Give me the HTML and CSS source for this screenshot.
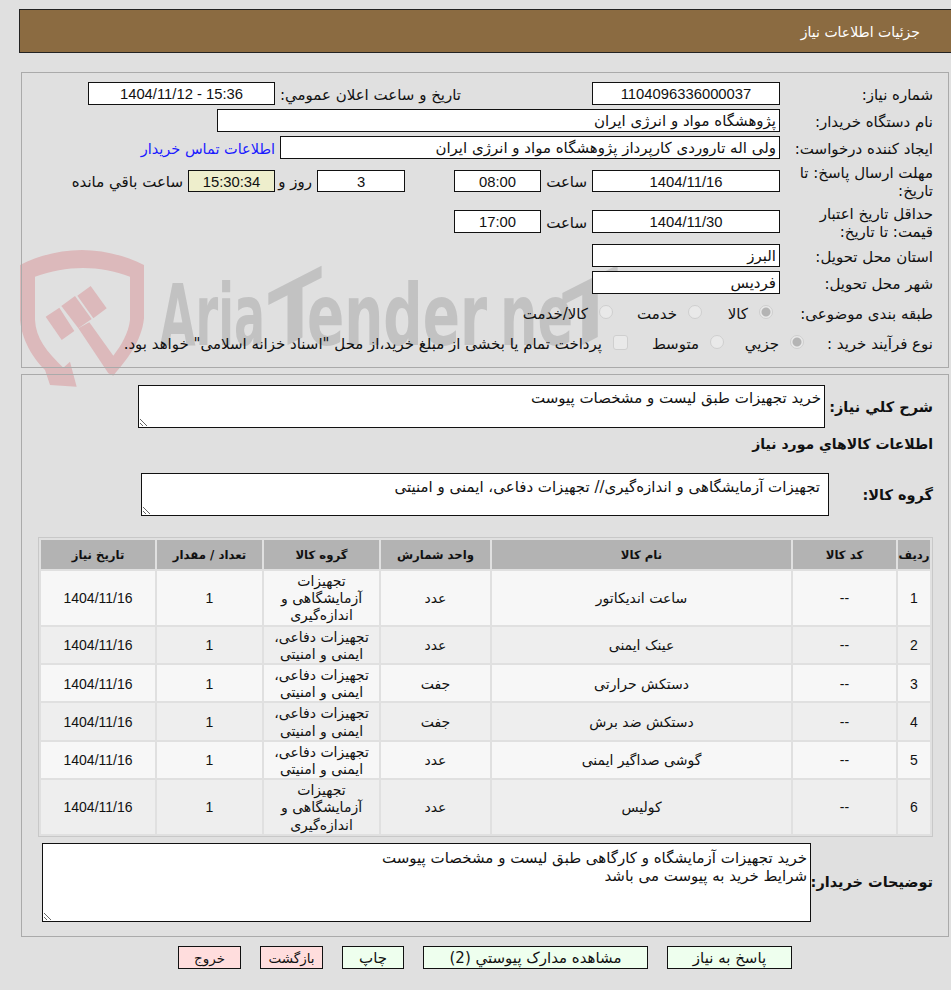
FILE: index.html
```html
<!DOCTYPE html>
<html lang="fa" dir="rtl">
<head>
<meta charset="utf-8">
<title>جزئیات اطلاعات نیاز</title>
<link rel="stylesheet" href="styles.css">
</head>
<body>
<svg class="mark-shield" viewBox="0 0 420 435" aria-hidden="true">
  <path class="shield" d="M170 425L150 350L130 368C80 320 48 280 45 225L45 95C140 60 240 60 330 95L330 225C325 265 305 300 280 332L208 232L175 250L265 385L280 392C320 345 365 290 372 220L372 60C250 0 120 0 0 60L0 225C8 300 50 350 75 375L90 420Z"/>
  <path class="shield" d="M77 215L118 188L163 258L125 285Z"/>
  <path class="shield" d="M124 183L165 153L215 222L175 250Z"/>
  <path class="shield" d="M172 152L212 123L260 190L220 220Z"/>
</svg>
<svg class="mark-text" viewBox="0 0 480 110" aria-hidden="true">
  <text class="mark-word" x="0" y="85" textLength="105" lengthAdjust="spacingAndGlyphs">Aria</text>
  <text class="mark-word" x="108" y="85" textLength="54" lengthAdjust="spacingAndGlyphs" transform="translate(0 65) skewY(-27)">T</text>
  <text class="mark-word" x="147" y="85" textLength="180" lengthAdjust="spacingAndGlyphs">ender</text>
  <text class="mark-word" x="340" y="85" textLength="73" lengthAdjust="spacingAndGlyphs">ne</text>
  <text class="mark-word" x="402" y="85" textLength="56" lengthAdjust="spacingAndGlyphs" transform="translate(0 215) skewY(-27)">T</text>
</svg>

<header class="title-bar">جزئیات اطلاعات نیاز</header>

<section class="panel panel-info">
  <div class="row">
    <div class="label">شماره نیاز:</div>
    <div class="field center num w188">1104096336000037</div>
    <div class="label second-label">تاریخ و ساعت اعلان عمومي:</div>
    <div class="field center num w187">1404/11/12 - 15:36</div>
  </div>
  <div class="row">
    <div class="label">نام دستگاه خریدار:</div>
    <div class="field w563">پژوهشگاه مواد و انرژی ایران</div>
  </div>
  <div class="row">
    <div class="label">ایجاد کننده درخواست:</div>
    <div class="field w500">ولی اله تاروردی کارپرداز پژوهشگاه مواد و انرژی ایران</div>
    <a class="contact" href="#">اطلاعات تماس خریدار</a>
  </div>
  <div class="row tall-a">
    <div class="label">مهلت ارسال پاسخ: تا<br>تاریخ:</div>
    <div class="field center num w188 short">1404/11/16</div>
    <div class="word w41">ساعت</div>
    <div class="field center num w87 short">08:00</div>
    <div class="field center num w88 short days">3</div>
    <div class="word w29">روز و</div>
    <div class="field center num w87 short timer">15:30:34</div>
    <div class="word">ساعت باقي مانده</div>
  </div>
  <div class="row tall-b">
    <div class="label">حداقل تاریخ اعتبار<br>قیمت: تا تاریخ:</div>
    <div class="field center num w188">1404/11/30</div>
    <div class="word w41">ساعت</div>
    <div class="field center num w87">17:00</div>
  </div>
  <div class="row">
    <div class="label">استان محل تحویل:</div>
    <div class="field w188">البرز</div>
  </div>
  <div class="row">
    <div class="label">شهر محل تحویل:</div>
    <div class="field w188">فردیس</div>
  </div>
  <div class="row choice">
    <div class="label wide">طبقه بندی موضوعی:</div>
    <label class="option o66"><input class="radio" type="radio" name="cat" checked disabled>کالا</label>
    <label class="option o84"><input class="radio" type="radio" name="cat" disabled>خدمت</label>
    <label class="option"><input class="radio" type="radio" name="cat" disabled>کالا/خدمت</label>
  </div>
  <div class="row choice">
    <div class="label narrow">نوع فرآیند خرید :</div>
    <label class="option o75"><input class="radio" type="radio" name="proc" checked disabled>جزيي</label>
    <label class="option o91"><input class="radio" type="radio" name="proc" disabled>متوسط</label>
    <label class="option"><input class="check" type="checkbox" disabled>پرداخت تمام یا بخشی از مبلغ خرید،از محل "اسناد خزانه اسلامی" خواهد بود.</label>
  </div>
</section>

<section class="panel panel-items">
  <div class="block first">
    <div class="strong l108">شرح کلي نياز:</div>
    <textarea class="box b687" readonly>خرید تجهیزات طبق لیست و مشخصات پیوست</textarea>
  </div>
  <h2 class="strong heading">اطلاعات کالاهاي مورد نياز</h2>
  <div class="block">
    <div class="strong l104">گروه کالا:</div>
    <textarea class="box b688" readonly>تجهیزات آزمایشگاهی و اندازه‌گیری// تجهیزات دفاعی، ایمنی و امنیتی</textarea>
  </div>
  <table class="items">
    <colgroup>
      <col class="c32"><col class="c103"><col class="c299"><col class="c109"><col class="c115"><col class="c105"><col class="c114">
    </colgroup>
    <thead>
      <tr><th>ردیف</th><th>کد کالا</th><th>نام کالا</th><th>واحد شمارش</th><th>گروه کالا</th><th>تعداد / مقدار</th><th>تاریخ نیاز</th></tr>
    </thead>
    <tbody>
      <tr><td class="cn">1</td><td class="cn">--</td><td>ساعت اندیکاتور</td><td>عدد</td><td>تجهیزات<br>آزمایشگاهی و<br>اندازه‌گیری</td><td class="cn">1</td><td class="cn">1404/11/16</td></tr>
      <tr><td class="cn">2</td><td class="cn">--</td><td>عینک ایمنی</td><td>عدد</td><td>تجهیزات دفاعی،<br>ایمنی و امنیتی</td><td class="cn">1</td><td class="cn">1404/11/16</td></tr>
      <tr><td class="cn">3</td><td class="cn">--</td><td>دستکش حرارتی</td><td>جفت</td><td>تجهیزات دفاعی،<br>ایمنی و امنیتی</td><td class="cn">1</td><td class="cn">1404/11/16</td></tr>
      <tr><td class="cn">4</td><td class="cn">--</td><td>دستکش ضد برش</td><td>جفت</td><td>تجهیزات دفاعی،<br>ایمنی و امنیتی</td><td class="cn">1</td><td class="cn">1404/11/16</td></tr>
      <tr><td class="cn">5</td><td class="cn">--</td><td>گوشی صداگیر ایمنی</td><td>عدد</td><td>تجهیزات دفاعی،<br>ایمنی و امنیتی</td><td class="cn">1</td><td class="cn">1404/11/16</td></tr>
      <tr><td class="cn">6</td><td class="cn">--</td><td>کولیس</td><td>عدد</td><td>تجهیزات<br>آزمایشگاهی و<br>اندازه‌گیری</td><td class="cn">1</td><td class="cn">1404/11/16</td></tr>
    </tbody>
  </table>
  <div class="block last">
    <div class="strong l122">توضیحات خریدار:</div>
    <textarea class="box b769" readonly>خرید تجهیزات آزمایشگاه و کارگاهی طبق لیست و مشخصات پیوست
شرایط خرید به پیوست می باشد</textarea>
  </div>
</section>

<nav class="actions">
  <button class="btn go w125" type="button">پاسخ به نیاز</button>
  <button class="btn go w225" type="button">مشاهده مدارک پیوستي (2)</button>
  <button class="btn go w62" type="button">چاپ</button>
  <button class="btn stop w63" type="button">بازگشت</button>
  <button class="btn stop w63" type="button">خروج</button>
</nav>
</body>
</html>
```
FILE: styles.css
```css
html { background: #e0e0e0; }
body {
  margin: 0;
  width: 951px;
  height: 990px;
  position: relative;
  overflow: hidden;
  font-family: "DejaVu Sans", sans-serif;
  font-size: 15px;
  line-height: 18px;
  color: #111;
}
.mark-shield {
  position: absolute;
  left: 20px;
  top: 245px;
  width: 140px;
  height: 145px;
  z-index: -1;
}
.shield { fill: #dcb9bb; }
.mark-text {
  position: absolute;
  left: 160px;
  top: 260px;
  width: 480px;
  height: 110px;
  z-index: -1;
  direction: ltr;
}
.mark-word {
  fill: #c2c2c2;
  font-family: "DejaVu Sans", sans-serif;
  font-weight: 700;
  font-size: 85px;
}
.title-bar {
  box-sizing: border-box;
  height: 44px;
  margin: 9px 0 0 19px;
  padding: 0 31px 0 0;
  background: #8b6b41;
  border: solid #222;
  border-width: 1px 0 1px 1px;
  color: #fff;
  font-size: 14px;
  line-height: 44px;
}
.panel {
  box-sizing: border-box;
  width: 928px;
  margin-right: 2px;
  margin-left: 21px;
  border: 1px solid #aaa;
}
.panel-info {
  height: 296px;
  margin-top: 19px;
  padding: 9px 15px 0 0;
}
.panel-items {
  height: 563px;
  margin-top: 6px;
  padding: 0 15px 0 0;
}
.row {
  display: flex;
  align-items: center;
  gap: 5px;
  min-height: 23px;
  margin-bottom: 4px;
}
.row.tall-a { height: 36px; margin-bottom: 5px; }
.row.tall-b { height: 35px; margin-bottom: 5px; }
.row.choice { height: 30px; margin-bottom: 0; }
.label, .word, .contact { margin-top: 2px; }
.label {
  box-sizing: border-box;
  width: 148px;
  flex: none;
  white-space: nowrap;
}
.label.wide { width: 160px; margin-left: -5px; }
.label.narrow { width: 129px; margin-left: -5px; }
.label.second-label { width: 181px; margin-right: 126px; }
.field {
  box-sizing: border-box;
  height: 23px;
  padding: 0 3px 0 4px;
  background: #fff;
  border: 1px solid #111;
  line-height: 23px;
  flex: none;
}
.field.short { height: 22px; line-height: 22px; }
.center { text-align: center; padding: 0; }
.num { font-family: "Liberation Sans", sans-serif; font-size: 14.8px; direction: ltr; }
.w188 { width: 188px; }
.w187 { width: 187px; }
.w563 { width: 563px; }
.w500 { width: 500px; }
.w87 { width: 87px; }
.w88 { width: 88px; }
.w41 { width: 41px; flex: none; white-space: nowrap; }
.w29 { width: 29px; flex: none; margin-left: 3px; white-space: nowrap; }
.days { margin-right: 44px; }
.timer { background: #eeeecc; }
.contact { color: #1a1aff; font-size: 14.5px; text-decoration: none; white-space: nowrap; }
.option { display: flex; align-items: center; flex: none; white-space: nowrap; margin-top: 2px; }
.o66 { width: 66px; }
.o84 { width: 84px; }
.o75 { width: 75px; }
.o91 { width: 91px; }
.radio, .check {
  appearance: none;
  box-sizing: border-box;
  flex: none;
  margin: -4px 0 0 11px;
  background: #e9e9e9;
  border: 1px solid #cfcfcf;
}
.radio {
  width: 14px;
  height: 14px;
  border-radius: 50%;
}
.radio:checked { background: radial-gradient(circle, #b4b4b4 0 4px, #e9e9e9 5px); }
.check { width: 15px; height: 15px; border-radius: 3px; }
.block { display: flex; align-items: center; }
.block.first { margin-top: 10px; }
.block.last { margin-top: 6px; }
.strong { font-weight: 700; font-size: 14.5px; margin: 0; flex: none; white-space: nowrap; }
.l108 { width: 108px; }
.l104 { width: 104px; }
.l122 { width: 122px; }
.heading { height: 18px; margin: 7px 0 20px; line-height: 18px; font-size: 14px; }
.box {
  box-sizing: border-box;
  display: block;
  background: #fff;
  border: 1px solid #111;
  padding: 3px 3px 0 0;
  margin: 0;
  font: inherit;
  color: inherit;
  line-height: 18px;
  outline: none;
  flex: none;
}
.b687 { width: 687px; height: 43px; }
.b688 { width: 688px; height: 43px; padding-right: 8px; padding-top: 4px; }
.b769 { width: 769px; height: 79px; padding-top: 5px; }
.items {
  box-sizing: border-box;
  width: 895px;
  margin-top: 21px;
  table-layout: fixed;
  border: 1px solid #c8c8c8;
  border-spacing: 2px;
  border-collapse: separate;
}
.c32 { width: 32px; }
.c103 { width: 103px; }
.c299 { width: 299px; }
.c109 { width: 109px; }
.c115 { width: 115px; }
.c105 { width: 105px; }
.c114 { width: 114px; }
.items th {
  height: 29px;
  padding: 0;
  background: #b3b3b3;
  font-size: 11.7px;
  font-weight: 700;
  text-align: center;
}
.items td {
  padding: 2px 0 0;
  text-align: center;
  font-size: 14px;
  line-height: 17.2px;
  background: #f7f7f7;
}
.items td.cn { font-family: "Liberation Sans", sans-serif; font-size: 14px; }
.items tbody tr:nth-child(even) td { background: #eeeeee; }
.actions {
  display: flex;
  gap: 19px;
  margin: 9px 159px 0 0;
}
.btn {
  box-sizing: border-box;
  height: 23px;
  padding: 0;
  border: 1px solid #111;
  font: inherit;
  color: #111;
  line-height: 20px;
  flex: none;
}
.go { background: #eeffee; }
.stop { background: #ffdddd; font-size: 13.5px; }
.w125 { width: 125px; }
.w225 { width: 225px; }
.w62 { width: 62px; }
.w63 { width: 63px; }
```
